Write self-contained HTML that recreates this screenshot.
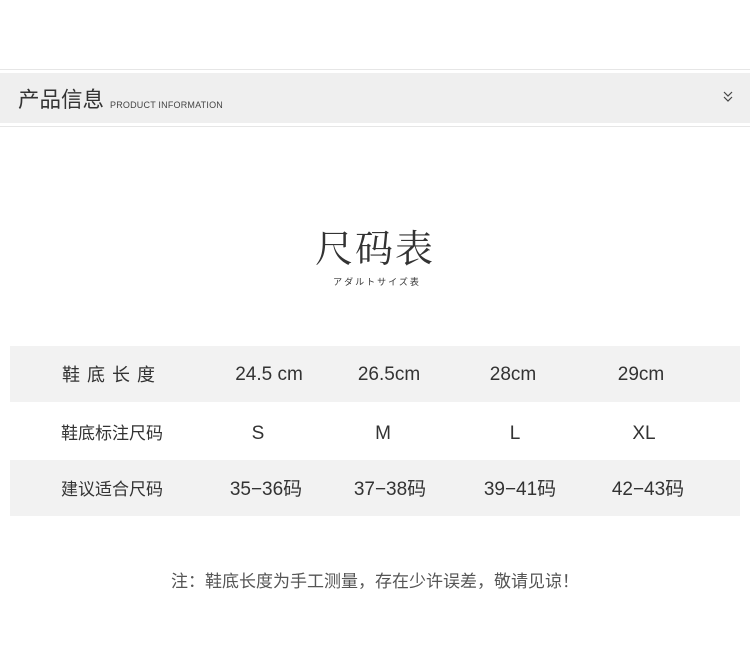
<!DOCTYPE html>
<html><head><meta charset="utf-8"><style>
body{margin:0;width:750px;height:647px;background:#fff;position:relative;font-family:"Liberation Sans","Noto Sans CJK SC",sans-serif;color:#333;overflow:hidden}
.a{position:absolute}
.row{position:absolute;left:10px;width:730px;height:56px}
.c{position:absolute;top:0;line-height:56px;font-size:19px;color:#333;transform:translateX(-50%);white-space:nowrap}
</style></head><body>
<div class="a" style="left:0;top:69px;width:750px;height:1px;background:#e6e6e6"></div>
<div class="a" style="left:0;top:73px;width:750px;height:50px;background:#efefef"></div>
<div class="a" style="left:0;top:126px;width:750px;height:1px;background:#e6e6e6"></div>
<div class="a" style="left:18px;top:87px;font-size:21.5px;color:#333;line-height:26px">产品信息</div>
<div class="a" style="left:110px;top:100px;font-size:9px;color:#444;line-height:11px;letter-spacing:.2px">PRODUCT INFORMATION</div>
<svg class="a" style="left:723px;top:91px" width="10" height="12" viewBox="0 0 10 12"><path d="M1 1l4 4 4-4M1 6l4 4 4-4" fill="none" stroke="#444" stroke-width="1.2"/></svg>
<div class="a" style="left:0;width:750px;top:222px;text-align:center;font-family:'Noto Serif CJK SC',serif;font-size:38px;line-height:48px;color:#333;letter-spacing:2px">尺码表</div>
<div class="a" style="left:2px;width:750px;top:276px;text-align:center;font-size:9px;line-height:12px;color:#333;letter-spacing:2px;font-family:'Noto Sans CJK JP',sans-serif">アダルトサイズ表</div>
<div class="row" style="top:346px;background:#f2f2f2">
<div class="c" style="left:102px;letter-spacing:7px;font-size:18px;top:1px">鞋底长度</div>
<div class="c" style="left:259px;top:1px">24.5 cm</div><div class="c" style="left:379px;top:1px">26.5cm</div><div class="c" style="left:503px;top:1px">28cm</div><div class="c" style="left:631px;top:1px">29cm</div></div>
<div class="row" style="top:404px">
<div class="c" style="left:102px;font-size:17px;top:2px">鞋底标注尺码</div>
<div class="c" style="left:248px;top:2px">S</div><div class="c" style="left:373px;top:2px">M</div><div class="c" style="left:505px;top:2px">L</div><div class="c" style="left:634px;top:2px">XL</div></div>
<div class="row" style="top:460px;background:#f2f2f2">
<div class="c" style="left:102px;font-size:17px;top:2px">建议适合尺码</div>
<div class="c" style="left:256px;top:2px">35−36码</div><div class="c" style="left:380px;top:2px">37−38码</div><div class="c" style="left:510px;top:2px">39−41码</div><div class="c" style="left:638px;top:2px">42−43码</div></div>
<div class="a" style="left:5px;width:740px;top:571px;text-align:center;font-size:17px;line-height:22px;color:#555;letter-spacing:0">注：鞋底长度为手工测量，存在少许误差，敬请见谅！</div>
</body></html>
